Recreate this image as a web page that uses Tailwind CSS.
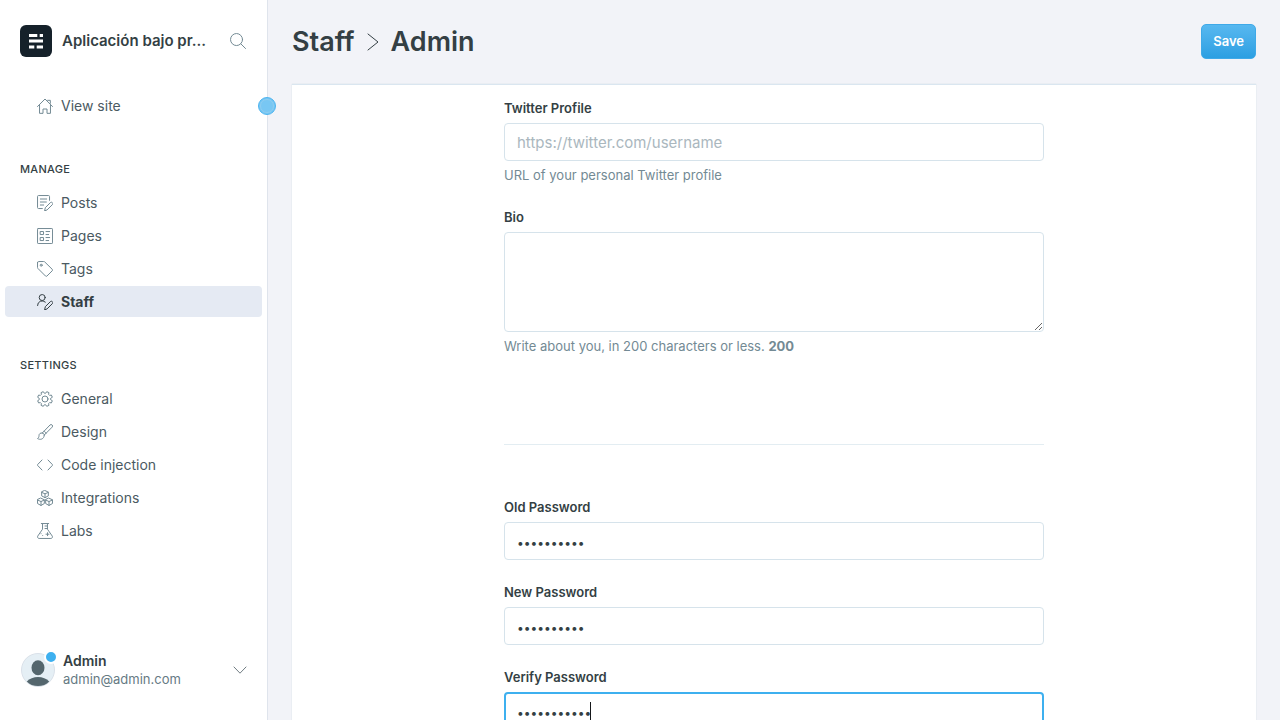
<!DOCTYPE html>
<html lang="es">
<head>
<meta charset="utf-8">
<meta name="viewport" content="width=device-width, initial-scale=1">
<title>Staff - Admin</title>
<script src="https://cdn.jsdelivr.net/npm/@tailwindcss/browser@4"></script>
</head>
<body class="flex h-screen overflow-hidden bg-[#f2f3f8] font-['Inter','Liberation_Sans',sans-serif] text-[#343f44]">

<nav class="relative flex w-[268px] shrink-0 flex-col border-r border-[#dfe4ec] bg-white">
  <header class="flex items-center px-5 pt-[25px]">
    <svg class="size-8 shrink-0" viewBox="0 0 32 32" aria-hidden="true">
      <rect width="32" height="32" rx="6" fill="#15212a"/>
      <path fill="#fff" d="M9 9h8.300v3H9zM19.700 9H23v3h-3.300zM9 14.500h14v3H9zM9 20.500h5.300v3H9zM16.700 20.500H23v3h-6.300z"/>
    </svg>
    <h2 class="ml-[10px] w-[150px] text-[15px] font-semibold whitespace-nowrap">Aplicación bajo pr...</h2>
    <button type="button" aria-label="Search" class="ml-[18px] text-[#738a94]">
      <svg class="size-4" viewBox="0 0 24 24" fill="none" stroke="currentColor" stroke-width="1.500" stroke-linecap="round"><circle cx="9.800" cy="9.800" r="9"/><path d="M16.300 16.300l7 7"/></svg>
    </button>
  </header>

  <ul class="mx-[5px] mt-[33px] text-sm text-[#4b5a62]">
    <li><a href="#" class="flex h-[31px] items-center gap-2 rounded px-8">
      <svg class="size-4 text-[#738a94]" viewBox="0 0 24 24" fill="none" stroke="currentColor" stroke-width="1.500" stroke-linecap="round" stroke-linejoin="round"><path d="M.8 12.800L12 1.500l11.200 11.300M3.800 11v12H9v-6.500h6V23h5.200V11M16 3.500h4v4.500"/></svg>
      View site</a></li>
  </ul>

  <h3 class="mx-5 mt-10 text-[11px] leading-4 font-medium tracking-wide uppercase">Manage</h3>
  <ul class="mx-[5px] mt-[10px] flex flex-col gap-[2px] text-sm text-[#4b5a62]">
    <li><a href="#" class="flex h-[31px] items-center gap-2 rounded px-8">
      <svg class="size-4 text-[#738a94]" viewBox="0 0 24 24" fill="none" stroke="currentColor" stroke-width="1.500" stroke-linecap="round" stroke-linejoin="round"><path d="M8 20.300H2.300A1.500 1.500 0 0 1 .8 18.800V2.300A1.500 1.500 0 0 1 2.300.8h15a1.500 1.500 0 0 1 1.500 1.500V8M5 6h9.500M5 10.500h9M5 15h5M11.500 23.200l1-4.200 7.500-7.500a2.100 2.100 0 0 1 3 3l-7.500 7.500z"/></svg>
      Posts</a></li>
    <li><a href="#" class="flex h-[31px] items-center gap-2 rounded px-8">
      <svg class="size-4 text-[#738a94]" viewBox="0 0 24 24" fill="none" stroke="currentColor" stroke-width="1.500" stroke-linecap="round" stroke-linejoin="round"><rect x=".8" y=".8" width="22.500" height="22.500" rx="1"/><path d="M5.300 5.300h4.500v4.500H5.300zM5.300 14.300h4.500v4.500H5.300zM13.500 5.300H19M13.500 9.800h4M13.500 14.300H19M13.500 18.800h4"/></svg>
      Pages</a></li>
    <li><a href="#" class="flex h-[31px] items-center gap-2 rounded px-8">
      <svg class="size-4 text-[#738a94]" viewBox="0 0 24 24" fill="none" stroke="currentColor" stroke-width="1.500" stroke-linecap="round" stroke-linejoin="round"><path d="M.8 2.300v7.500a2 2 0 0 0 .6 1.400l11.400 11.400a1.500 1.500 0 0 0 2.100 0l8-8a1.500 1.500 0 0 0 0-2.100L11.500 1.300A2 2 0 0 0 10 .8H2.300A1.500 1.500 0 0 0 .8 2.300z"/><circle cx="6.300" cy="6.300" r="1.500"/></svg>
      Tags</a></li>
    <li><a href="#" aria-current="page" class="flex h-[31px] items-center gap-2 rounded bg-[#e5eaf3] px-8 font-bold text-[#343f44]">
      <svg class="size-4" viewBox="0 0 24 24" fill="none" stroke="currentColor" stroke-width="1.500" stroke-linecap="round" stroke-linejoin="round"><circle cx="7.800" cy="5.300" r="4.500"/><path d="M.8 17.300a7 7 0 0 1 11.700-5.200M11.500 23.200l1-4.200 7.500-7.500a2.100 2.100 0 0 1 3 3l-7.500 7.500z"/></svg>
      Staff</a></li>
  </ul>

  <h3 class="mx-5 mt-10 text-[11px] leading-4 font-medium tracking-wide uppercase">Settings</h3>
  <ul class="mx-[5px] mt-[10px] flex flex-col gap-[2px] text-sm text-[#4b5a62]">
    <li><a href="#" class="flex h-[31px] items-center gap-2 rounded px-8">
      <svg class="size-4 text-[#738a94]" viewBox="0 0 24 24" fill="none" stroke="currentColor" stroke-width="1.500" stroke-linecap="round" stroke-linejoin="round"><circle cx="12" cy="12" r="4.500"/><path d="M20.700 13.100L23 14.600 21.600 17.900 18.900 17.400 17.400 18.900 17.900 21.600 14.600 23 13.100 20.700H10.900L9.400 23 6.100 21.600 6.600 18.900 5.100 17.400 2.400 17.900 1 14.600 3.300 13.100V10.900L1 9.400 2.400 6.100 5.100 6.600 6.600 5.100 6.100 2.400 9.400 1 10.900 3.300H13.100L14.600 1 17.900 2.400 17.400 5.100 18.900 6.600 21.600 6.100 23 9.400 20.700 10.900z"/></svg>
      General</a></li>
    <li><a href="#" class="flex h-[31px] items-center gap-2 rounded px-8">
      <svg class="size-4 text-[#738a94]" viewBox="0 0 24 24" fill="none" stroke="currentColor" stroke-width="1.500" stroke-linecap="round" stroke-linejoin="round"><path d="M8 13.500L19.500 1.500a2.200 2.200 0 0 1 3.200 3.200L11 16.500M8 13.500c1.600.2 2.800 1.400 3 3M8 13.500c-2.800-.6-5 1-5 4 0 2-.7 3.500-2.200 4.300 3.700 2.300 9.700 1.700 10.200-5.300M10.500 11c1.500.4 2.600 1.500 3 3"/></svg>
      Design</a></li>
    <li><a href="#" class="flex h-[31px] items-center gap-2 rounded px-8">
      <svg class="size-4 text-[#738a94]" viewBox="0 0 24 24" fill="none" stroke="currentColor" stroke-width="1.500" stroke-linecap="round" stroke-linejoin="round"><path d="M7.500 4.500L.8 11.500a.8.800 0 0 0 0 1l6.700 7M16.500 4.500l6.700 7a.8.800 0 0 1 0 1l-6.700 7"/></svg>
      Code injection</a></li>
    <li><a href="#" class="flex h-[31px] items-center gap-2 rounded px-8">
      <svg class="size-4 text-[#738a94]" viewBox="0 0 24 24" fill="none" stroke="currentColor" stroke-width="1.500" stroke-linecap="round" stroke-linejoin="round"><path d="M12 .8l5 2.400v5.600l-5 2.700-5-2.700V3.200zM7 3.500l5 2.300 5-2.300M12 5.800v5.700M6 12.300l5 2.400v5.600l-5 2.900-5.200-2.900v-5.600zM.8 15L6 17.300 11 15M6 17.300v5.900M18 12.300l5.200 2.400v5.600L18 23.200l-5-2.900v-5.600zM13 15l5 2.300 5.200-2.300M18 17.300v5.900"/></svg>
      Integrations</a></li>
    <li><a href="#" class="flex h-[31px] items-center gap-2 rounded px-8">
      <svg class="size-4 text-[#738a94]" viewBox="0 0 24 24" fill="none" stroke="currentColor" stroke-width="1.500" stroke-linecap="round" stroke-linejoin="round"><path d="M6.500.8h11M8.300.8v8.500L1.200 19.500a2.400 2.400 0 0 0 2 3.700h17.600a2.400 2.400 0 0 0 2-3.700L15.700 9.300V.8M12 4.500h3.700M12 8.300h3.700M15.800 14.500v4.500M13.500 16.800H18M8.500 18.800h.1M6 16h.1"/></svg>
      Labs</a></li>
  </ul>

  <button type="button" class="mr-5 mb-8 ml-[21px] mt-auto flex items-center text-left">
    <span class="relative">
      <svg class="size-[34px]" viewBox="0 0 34 34" aria-hidden="true">
        <circle cx="17" cy="17" r="16.500" fill="#e5eff5" stroke="#dae1e9"/>
        <ellipse cx="17" cy="14.700" rx="6.500" ry="7.500" fill="#54666d"/>
        <path d="M5.800 28.500C8.500 25.500 12.500 24 17 24s8.500 1.500 11.200 4.500C25.500 31.500 21.500 33 17 33S8.500 31.500 5.800 28.500z" fill="#54666d"/>
      </svg>
      <span class="absolute -top-[3px] -right-[3px] size-[14px] rounded-full border-2 border-white bg-[#3eb0ef]"></span>
    </span>
    <span class="ml-2 flex flex-col">
      <span class="text-sm leading-[18px] font-semibold">Admin</span>
      <span class="text-[13px] leading-[18px] text-[#667a84]">admin@admin.com</span>
    </span>
    <svg class="ml-auto h-2 w-[14px]" viewBox="0 0 14 8" fill="none" stroke="#4b5a62" stroke-width=".8" stroke-linecap="round" stroke-linejoin="round" aria-hidden="true"><path d="M1 1l6 6.200L13 1"/></svg>
  </button>

  <button type="button" aria-label="Collapse menu" class="absolute top-[97px] -right-[9px] size-[18px] rounded-full border border-[#4db4f0] bg-[#78c7f3] p-px"><span class="block size-full rounded-full border border-[#8fcdf0]"></span></button>
</nav>

<main class="flex min-w-0 flex-1 flex-col px-6">
  <header class="flex shrink-0 items-center justify-between pt-6 pb-[25px]">
    <h1 class="flex items-center text-[27px] leading-[35px] font-semibold">
      <a href="#">Staff</a>
      <svg class="mx-3 h-[18px] w-3" viewBox="0 0 12 18" fill="none" stroke="#343f44" stroke-linecap="round" stroke-linejoin="round" aria-hidden="true"><path d="M1 1l10 8L1 17"/></svg>
      Admin
    </h1>
    <button type="button" class="h-[35px] rounded-[5px] border border-[#3fa9e8] bg-linear-to-b from-[#57b8f0] to-[#2b9fe2] px-[11px] text-[13px] font-semibold text-white">Save</button>
  </header>

  <section class="min-h-0 flex-1 overflow-hidden border-t border-[#dae6f0] bg-white shadow-[0_0_1px_#c5d2d9]">
    <form class="mx-auto w-full max-w-[540px] pt-[15px] text-[13px] leading-4">
      <label for="twitter" class="block font-semibold">Twitter Profile</label>
      <input id="twitter" type="url" placeholder="https://twitter.com/username" class="mt-[7px] block h-[38px] w-full rounded border border-[#d6e3eb] bg-white px-3 text-[15px] placeholder:text-[#aab7be]">
      <p class="mt-[6px] text-[#738a94]">URL of your personal Twitter profile</p>

      <label for="bio" class="mt-[26px] block font-semibold">Bio</label>
      <textarea id="bio" class="mt-[7px] block h-[100px] w-full resize rounded border border-[#d6e3eb] bg-white px-3 py-2 text-[15px]"></textarea>
      <p class="mt-[6px] text-[#738a94]">Write about you, in 200 characters or less. <b class="font-bold">200</b></p>

      <hr class="mt-[90px] border-[#e3edf2]">

      <label for="old-password" class="mt-[54px] block font-semibold">Old Password</label>
      <input id="old-password" type="password" value="1234567890" class="mt-[7px] block h-[38px] w-full rounded border border-[#d6e3eb] bg-white px-3 pt-[3px] text-xs">
      <label for="new-password" class="mt-6 block font-semibold">New Password</label>
      <input id="new-password" type="password" value="1234567890" class="mt-[7px] block h-[38px] w-full rounded border border-[#d6e3eb] bg-white px-3 pt-[3px] text-xs">
      <label for="verify-password" class="mt-6 block font-semibold">Verify Password</label>
      <div class="relative mt-[7px]">
        <input id="verify-password" type="password" value="12345678901" class="block h-[38px] w-full rounded border-2 border-[#3eb0ef] bg-white px-[11px] pt-[3px] text-xs">
        <span class="absolute top-[10px] left-[86px] h-[18px] w-px bg-[#15171a]"></span>
      </div>
    </form>
  </section>
</main>
</body>
</html>
